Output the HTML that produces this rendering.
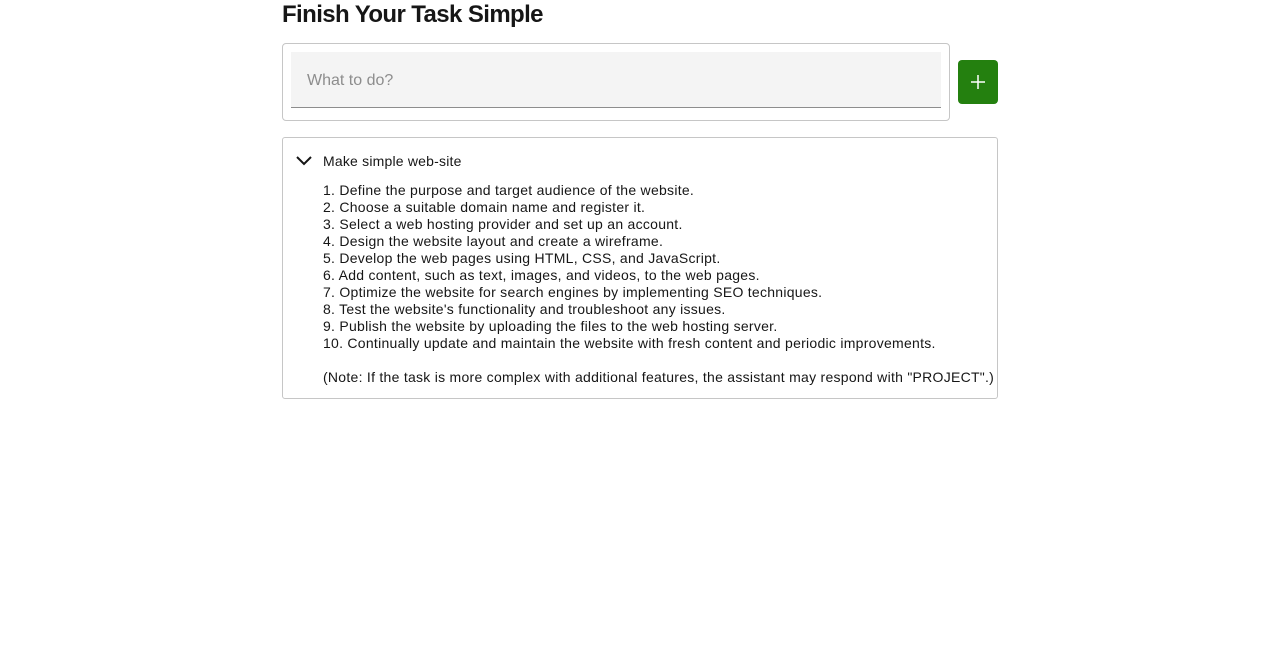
<!DOCTYPE html>
<html><head><style>
body{margin:0;background:#fff;font-family:"Liberation Sans",sans-serif;color:#161616;}
h1{position:absolute;left:282px;top:1px;margin:0;font-size:24px;line-height:28px;font-weight:bold;letter-spacing:-0.6px;}
.box{position:absolute;left:282px;top:43px;width:666px;height:76px;border:1px solid #c6c6c6;border-radius:4px;}
.field{position:absolute;left:8px;top:8px;width:650px;height:55px;background:#f4f4f4;border-bottom:1px solid #8d8d8d;}
.field span{position:absolute;left:16px;top:19px;font-size:16px;color:#8d8d8d;line-height:20px;}
.btn{position:absolute;left:958px;top:60px;width:40px;height:44px;background:#24800f;border-radius:4px;}
.acc{position:absolute;left:282px;top:137px;width:714px;height:260px;border:1px solid #c6c6c6;border-radius:3px;}
.title{position:absolute;left:40px;top:15px;font-size:14px;line-height:17px;letter-spacing:0.2px;}
.list{position:absolute;left:40px;top:44px;font-size:14px;line-height:17px;white-space:pre;letter-spacing:0.27px;}
</style></head><body>
<h1>Finish Your Task Simple</h1>
<div class="box"><div class="field"><span>What to do?</span></div></div>
<div class="btn"><svg width="40" height="44"><path d="M20 15v14M13 22h14" stroke="#fff" stroke-width="1.5"/></svg></div>
<div class="acc">
<svg style="position:absolute;left:13px;top:17px" width="16" height="12"><path d="M1 2l7 7 7-7" stroke="#161616" stroke-width="2" fill="none"/></svg>
<div class="title">Make simple web-site</div>
<div class="list">1. Define the purpose and target audience of the website.
2. Choose a suitable domain name and register it.
3. Select a web hosting provider and set up an account.
4. Design the website layout and create a wireframe.
5. Develop the web pages using HTML, CSS, and JavaScript.
6. Add content, such as text, images, and videos, to the web pages.
7. Optimize the website for search engines by implementing SEO techniques.
8. Test the website's functionality and troubleshoot any issues.
9. Publish the website by uploading the files to the web hosting server.
10. Continually update and maintain the website with fresh content and periodic improvements.

(Note: If the task is more complex with additional features, the assistant may respond with "PROJECT".)</div>
</div>
</body></html>
